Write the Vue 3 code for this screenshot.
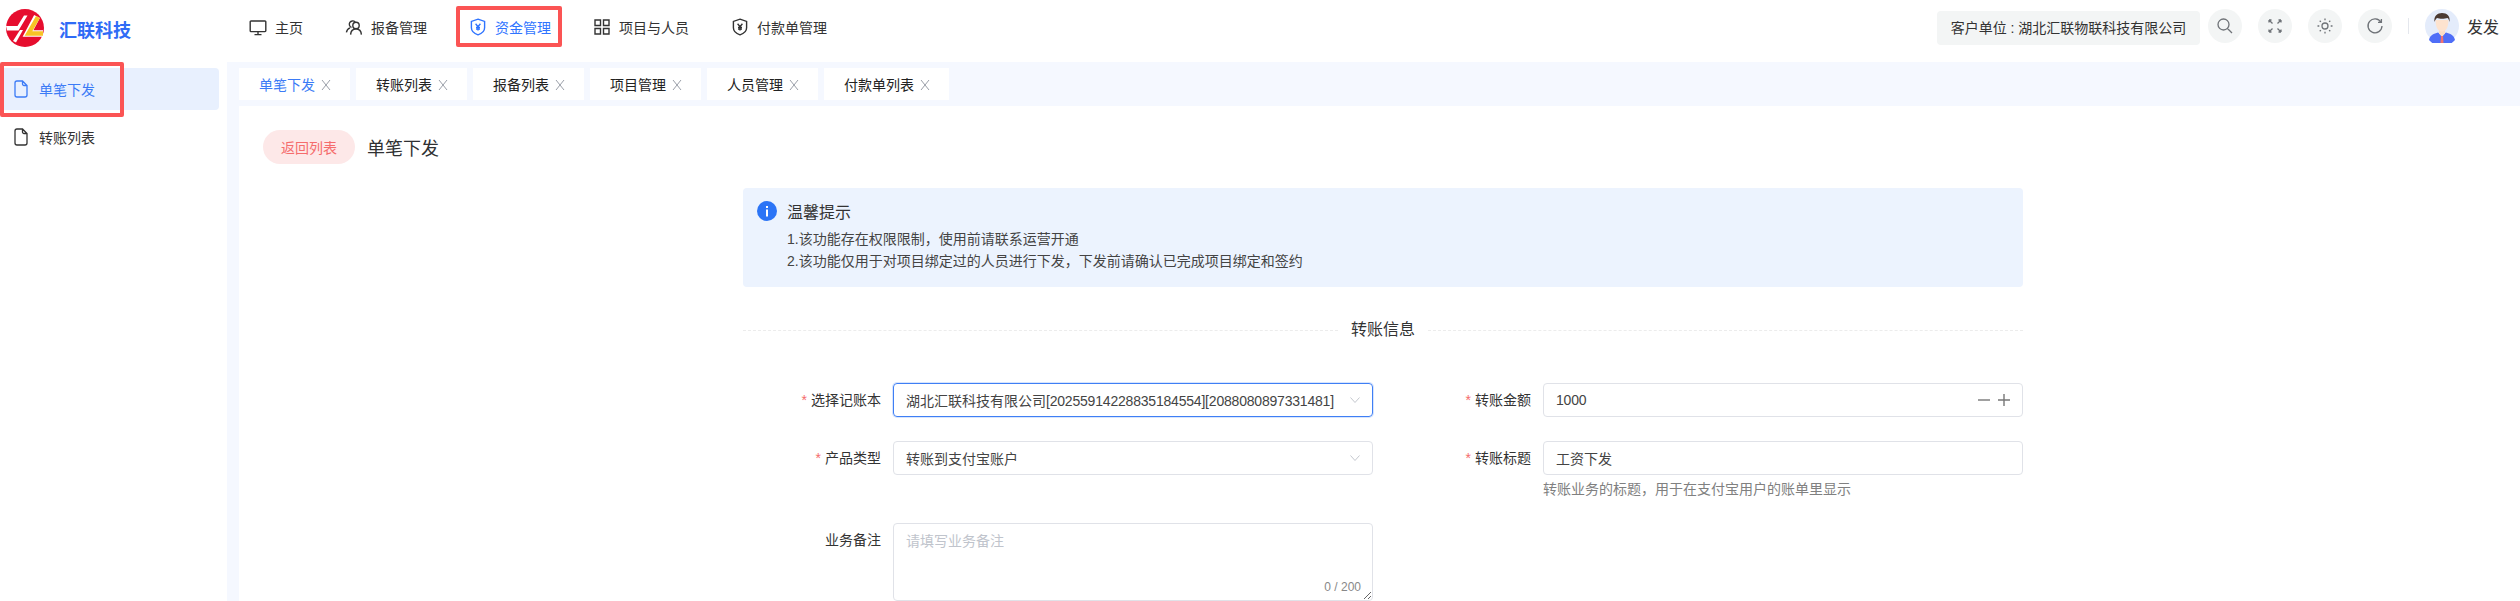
<script setup>
const icons = {
    monitor: 'M2 3h14a.8.8 0 0 1 .8.8v9a.8.8 0 0 1-.8.8H2a.8.8 0 0 1-.8-.8v-9A.8.8 0 0 1 2 3zM9 13.6v3M5.5 16.6h7',
    users: 'M6.5 9.5a3.4 3.4 0 1 1 3.6-5.6M11 4.2a3.2 3.2 0 1 1 0 6.4 3.2 3.2 0 0 1 0-6.4zM5.6 16.6c.2-3.3 2.4-5.6 5.4-5.6s5.2 2.3 5.4 5.6M1.4 14.4c.3-2 1.6-3.8 3.6-4.6',
    shield: 'M9 1.2l6.6 2.2v6.4c0 3.3-2.8 5.8-6.6 7-3.8-1.2-6.6-3.7-6.6-7V3.400zM6.600 5.800L9 8.600l2.400-2.800M9 8.600v4M7 9.400h4M7 11h4',
    grid: 'M2 2h5.500v5.500H2zM10.500 2H16v5.500h-5.500zM2 10.500h5.500V16H2zM10.500 10.500H16V16h-5.500z',
    search: 'M7.500 2a5.500 5.500 0 1 1 0 11 5.500 5.500 0 0 1 0-11zM11.500 11.500L16 16',
    expand: 'M3 3l3.500 3.500M3 3v2.500M3 3h2.500M15 3l-3.500 3.500M15 3v2.500M15 3h-2.500M3 15l3.500-3.500M3 15v-2.500M3 15h2.500M15 15l-3.500-3.500M15 15v-2.500M15 15h-2.500',
    sun: 'M9 6a3 3 0 1 1 0 6 3 3 0 0 1 0-6zM9 1.500v1.800M9 14.700v1.800M1.500 9h1.800M14.700 9h1.800M3.700 3.700l1.200 1.200M13.100 13.100l1.200 1.200M3.700 14.300l1.200-1.200M13.100 4.900l1.200-1.200',
    refresh: 'M15 5.200A7 7 0 1 0 16 9M15.400 2v3.400H12',
    file: 'M8.500 1H3a2 2 0 0 0-2 2v12a2 2 0 0 0 2 2h8a2 2 0 0 0 2-2V5.500zM8.500 1v3a1.500 1.500 0 0 0 1.500 1.500h3',
};

const navItems = [
    { label: '主页', icon: 'monitor' },
    { label: '报备管理', icon: 'users' },
    { label: '资金管理', icon: 'shield', active: true },
    { label: '项目与人员', icon: 'grid' },
    { label: '付款单管理', icon: 'shield' },
];

const toolIcons = ['search', 'expand', 'sun', 'refresh'];

const sideItems = [
    { label: '单笔下发', active: true },
    { label: '转账列表' },
];

const tabs = ['单笔下发', '转账列表', '报备列表', '项目管理', '人员管理', '付款单列表'];
</script>

<template>
    <div class="page">
        <header class="header">
            <div class="brand">
                <svg class="logo" viewBox="0 0 38 38">
                    <circle cx="19" cy="19" r="19" fill="#e60d2e" />
                    <path d="M0 17h11.500L18 6.500h3.500L12.500 21.500H1z" fill="#fff" />
                    <path d="M7 32l7-11h3l-7 12.500z" fill="#fff" />
                    <path d="M31 7.500L22 24.500h15" fill="none" stroke="#fff" stroke-width="6.500" />
                    <path d="M32 8L22.500 24.500H37" fill="none" stroke="#f7c325" stroke-width="4.500" />
                </svg>
                <span class="brand-name">汇联科技</span>
            </div>
            <nav class="nav">
                <a v-for="item in navItems" :key="item.label" :class="['nav-item', { active: item.active }]">
                    <svg class="icon" viewBox="0 0 18 18"><path :d="icons[item.icon]" /></svg>
                    {{ item.label }}
                </a>
            </nav>
            <div class="header-right">
                <div class="company">客户单位 : 湖北汇联物联科技有限公司</div>
                <button v-for="name in toolIcons" :key="name" class="tool">
                    <svg viewBox="0 0 18 18"><path :d="icons[name]" /></svg>
                </button>
                <span class="sep"></span>
                <svg class="avatar" viewBox="0 0 34 34">
                    <circle cx="17" cy="17" r="17" fill="#e4ecfb" />
                    <path d="M4 31c1-5 5-6.500 9-7.500l4 3 4-3c4 1 8 2.500 9 7.500a17 17 0 0 1-26 0z" fill="#4f6ef7" />
                    <path d="M14 21h6v3.500l-3 3.500-3-3.500z" fill="#fbdcc4" />
                    <path d="M16 27h2l.5 7h-3z" fill="#f2726f" />
                    <path d="M10.500 11c0 7 2.500 11.500 6.500 11.500s6.500-4.500 6.500-11.500z" fill="#fde3cf" />
                    <path d="M9.500 13c-1-6 3-9 7.500-9 5 0 8.500 3 7.500 9-.5-2-1-3.500-2-4-3 1-8 1-10.500 0-1 1-2 2-2.500 4z" fill="#4a3a33" />
                </svg>
                <span class="user-name">发发</span>
            </div>
        </header>

        <div class="body">
            <aside class="sidebar">
                <a v-for="item in sideItems" :key="item.label" :class="['side-item', { active: item.active }]">
                    <svg class="file-icon" viewBox="0 0 14 18"><path :d="icons.file" /></svg>
                    {{ item.label }}
                </a>
            </aside>

            <main class="main">
                <div class="tabs">
                    <div v-for="(tab, i) in tabs" :key="tab" :class="['tab', { active: i === 0 }]">
                        {{ tab }}
                        <svg class="tab-close" viewBox="0 0 10 10"><path d="M1 0l8 10M9 0L1 10" /></svg>
                    </div>
                </div>

                <section class="content">
                    <div class="title-row">
                        <button class="back-btn">返回列表</button>
                        <h2 class="page-title">单笔下发</h2>
                    </div>

                    <div class="panel">
                        <div class="notice">
                            <div class="notice-head">
                                <svg class="info-icon" viewBox="0 0 20 20">
                                    <circle cx="10" cy="10" r="10" fill="#2b74f6" />
                                    <rect x="9" y="8.500" width="2" height="7" fill="#fff" />
                                    <rect x="9" y="5" width="2" height="2" fill="#fff" />
                                </svg>
                                温馨提示
                            </div>
                            <p>1.该功能存在权限限制，使用前请联系运营开通</p>
                            <p>2.该功能仅用于对项目绑定过的人员进行下发，下发前请确认已完成项目绑定和签约</p>
                        </div>

                        <div class="divider"><span>转账信息</span></div>

                        <div class="form">
                            <div class="field">
                                <label class="req">选择记账本</label>
                                <div class="control select focus">
                                    <span>湖北汇联科技有限公司<span class="digits">[20255914228835184554][2088080897331481]</span></span>
                                    <svg class="chevron" viewBox="0 0 10 6"><path d="M.5.500L5 5.500 9.500.500" /></svg>
                                </div>
                            </div>
                            <div class="field">
                                <label class="req">转账金额</label>
                                <div class="control">
                                    <span class="digits">1000</span>
                                    <span class="stepper">
                                        <svg viewBox="0 0 12 12"><path d="M0 6h12" /></svg>
                                        <svg viewBox="0 0 12 12"><path d="M0 6h12M6 0v12" /></svg>
                                    </span>
                                </div>
                            </div>
                            <div class="field">
                                <label class="req">产品类型</label>
                                <div class="control select">
                                    <span>转账到支付宝账户</span>
                                    <svg class="chevron" viewBox="0 0 10 6"><path d="M.5.500L5 5.500 9.500.500" /></svg>
                                </div>
                            </div>
                            <div class="field">
                                <label class="req">转账标题</label>
                                <div class="control-wrap">
                                    <div class="control"><span>工资下发</span></div>
                                    <div class="help">转账业务的标题，用于在支付宝用户的账单里显示</div>
                                </div>
                            </div>
                            <div class="field">
                                <label>业务备注</label>
                                <div class="textarea">
                                    <span class="placeholder">请填写业务备注</span>
                                    <span class="counter">0 / 200</span>
                                </div>
                            </div>
                        </div>
                    </div>
                </section>
            </main>
        </div>

        <!-- red annotation frames drawn over the screenshot -->
        <div class="mark mark-nav"></div>
        <div class="mark mark-side"></div>
    </div>
</template>

<style scoped>
.page {
    position: relative;
    height: 601px;
    overflow: hidden;
    font-family: "Liberation Sans", "Noto Sans CJK SC", sans-serif;
    font-size: 14px;
    color: #333;
    background: #fff;
}

.header {
    height: 62px;
    display: flex;
    align-items: center;
}

.brand {
    width: 249px;
    flex-shrink: 0;
    padding-left: 6px;
    box-sizing: border-box;
    display: flex;
    align-items: center;
    gap: 15px;
}

.logo {
    width: 38px;
    height: 38px;
    margin-top: -6px;
}

.brand-name {
    font-size: 18px;
    font-weight: 700;
    color: #2f6bf6;
    margin-top: -5px;
}

.nav {
    display: flex;
    gap: 42px;
    margin-top: -8px;
}

.nav-item {
    display: flex;
    align-items: center;
    gap: 8px;
    white-space: nowrap;
}

.nav-item.active {
    color: #2f74ff;
}

.icon {
    width: 18px;
    height: 18px;
    fill: none;
    stroke: currentColor;
    stroke-width: 1.400;
}

.header-right {
    margin-left: auto;
    margin-top: -10px;
    padding-right: 21px;
    display: flex;
    align-items: center;
}

.company {
    width: 263px;
    height: 34px;
    line-height: 34px;
    text-align: center;
    background: #f3f5f5;
    border-radius: 4px;
    margin: 4px 8px 0 0;
    white-space: nowrap;
}

.tool {
    width: 34px;
    height: 34px;
    margin-right: 16px;
    padding: 8px;
    border: none;
    border-radius: 50%;
    background: #f3f5f5;
}

.tool svg {
    display: block;
    width: 18px;
    height: 18px;
    fill: none;
    stroke: #6f7378;
    stroke-width: 1.300;
}

.sep {
    width: 1px;
    height: 16px;
    background: #e4e7ed;
    margin-right: 16px;
}

.avatar {
    width: 34px;
    height: 34px;
}

.user-name {
    margin-left: 8px;
    font-size: 16px;
}

.body {
    display: flex;
    height: 539px;
}

.sidebar {
    width: 227px;
    flex-shrink: 0;
    padding: 6px 8px 0 0;
    box-sizing: border-box;
    display: flex;
    flex-direction: column;
    gap: 6px;
}

.side-item {
    height: 42px;
    padding-left: 14px;
    display: flex;
    align-items: center;
    gap: 11px;
    border-radius: 0 4px 4px 0;
}

.side-item.active {
    background: #e8f0fe;
    color: #3b7bf6;
}

.file-icon {
    width: 14px;
    height: 18px;
    fill: none;
    stroke: currentColor;
    stroke-width: 1.300;
}

.main {
    flex: 1;
    min-width: 0;
    display: flex;
    flex-direction: column;
    padding-left: 12px;
    background: #f5f8ff;
}

.tabs {
    height: 44px;
    flex-shrink: 0;
    display: flex;
    gap: 6px;
    padding-top: 6px;
    box-sizing: border-box;
}

.tab {
    height: 32px;
    padding: 0 19px 0 20px;
    display: flex;
    align-items: center;
    gap: 6px;
    background: #fff;
    color: #222;
    white-space: nowrap;
}

.tab.active {
    color: #3b7bf6;
}

.tab-close {
    width: 10px;
    height: 10px;
    margin-top: 2px;
    fill: none;
    stroke: #9a9fa8;
    stroke-width: 1;
}

.content {
    flex: 1;
    background: #fff;
    padding: 24px 0 0 24px;
}

.title-row {
    display: flex;
    align-items: center;
    gap: 12px;
}

.back-btn {
    width: 92px;
    height: 34px;
    padding: 0;
    border: none;
    border-radius: 17px;
    background: #fde8e8;
    color: #f56c6c;
    font: inherit;
}

.page-title {
    margin: 0;
    font-size: 18px;
    font-weight: 400;
    color: #303133;
}

.panel {
    width: 1280px;
    margin: 24px 0 0 480px;
}

.notice {
    height: 99px;
    box-sizing: border-box;
    padding: 11px 14px;
    background: #ecf3fe;
    border-radius: 4px;
}

.notice-head {
    display: flex;
    align-items: center;
    gap: 10px;
    height: 24px;
    font-size: 16px;
    margin-bottom: 6px;
}

.info-icon {
    width: 20px;
    height: 20px;
}

.notice p {
    margin: 0;
    padding-left: 30px;
    line-height: 21.500px;
    color: #444;
}

.divider {
    margin-top: 31px;
    display: flex;
    align-items: center;
    gap: 13px;
    font-size: 16px;
    line-height: 24px;
}

.divider::before,
.divider::after {
    content: '';
    flex: 1;
    border-top: 1px dashed #ececec;
}

.form {
    margin-top: 41px;
    display: grid;
    grid-template-columns: 630px 630px;
    column-gap: 20px;
}

.field {
    display: flex;
    margin-bottom: 24px;
}

.field label {
    width: 138px;
    margin-right: 12px;
    flex-shrink: 0;
    text-align: right;
    line-height: 34px;
    color: #333;
}

.req::before {
    content: '*';
    color: #f56c6c;
    margin-right: 4px;
}

.control-wrap {
    flex: 1;
}

.control {
    flex: 1;
    height: 34px;
    box-sizing: border-box;
    padding: 0 12px;
    display: flex;
    align-items: center;
    justify-content: space-between;
    border: 1px solid #e0e2e8;
    border-radius: 4px;
    white-space: nowrap;
    color: #444;
}

.control.focus {
    border-color: #3f7ff5;
    box-shadow: 0 0 0 1px #d7e5fd;
}

.digits {
    letter-spacing: -0.2px;
}

.chevron {
    width: 10px;
    height: 6px;
    fill: none;
    stroke: #c4c7ce;
}

.stepper {
    display: flex;
    gap: 8px;
}

.stepper svg {
    width: 12px;
    height: 12px;
    fill: none;
    stroke: #777;
    stroke-width: 1.400;
}

.help {
    margin-top: 4px;
    line-height: 20px;
    color: #808080;
}

.textarea {
    position: relative;
    flex: 1;
    height: 78px;
    box-sizing: border-box;
    padding: 6px 12px;
    border: 1px solid #e0e2e8;
    border-radius: 4px;
    line-height: 22px;
    resize: vertical;
    overflow: auto;
}

.placeholder {
    color: #c0c4cc;
}

.counter {
    position: absolute;
    right: 11px;
    bottom: 5px;
    font-size: 12px;
    line-height: 16px;
    color: #888;
}

.mark {
    position: absolute;
    box-sizing: border-box;
    border: 4px solid #fb5454;
    border-radius: 2px;
    pointer-events: none;
}

.mark-nav {
    left: 456px;
    top: 6px;
    width: 106px;
    height: 41px;
}

.mark-side {
    left: 0;
    top: 62px;
    width: 124px;
    height: 55px;
}
</style>

<style>
html,
body {
    margin: 0;
    overflow: hidden;
    background: #fff;
}
</style>
